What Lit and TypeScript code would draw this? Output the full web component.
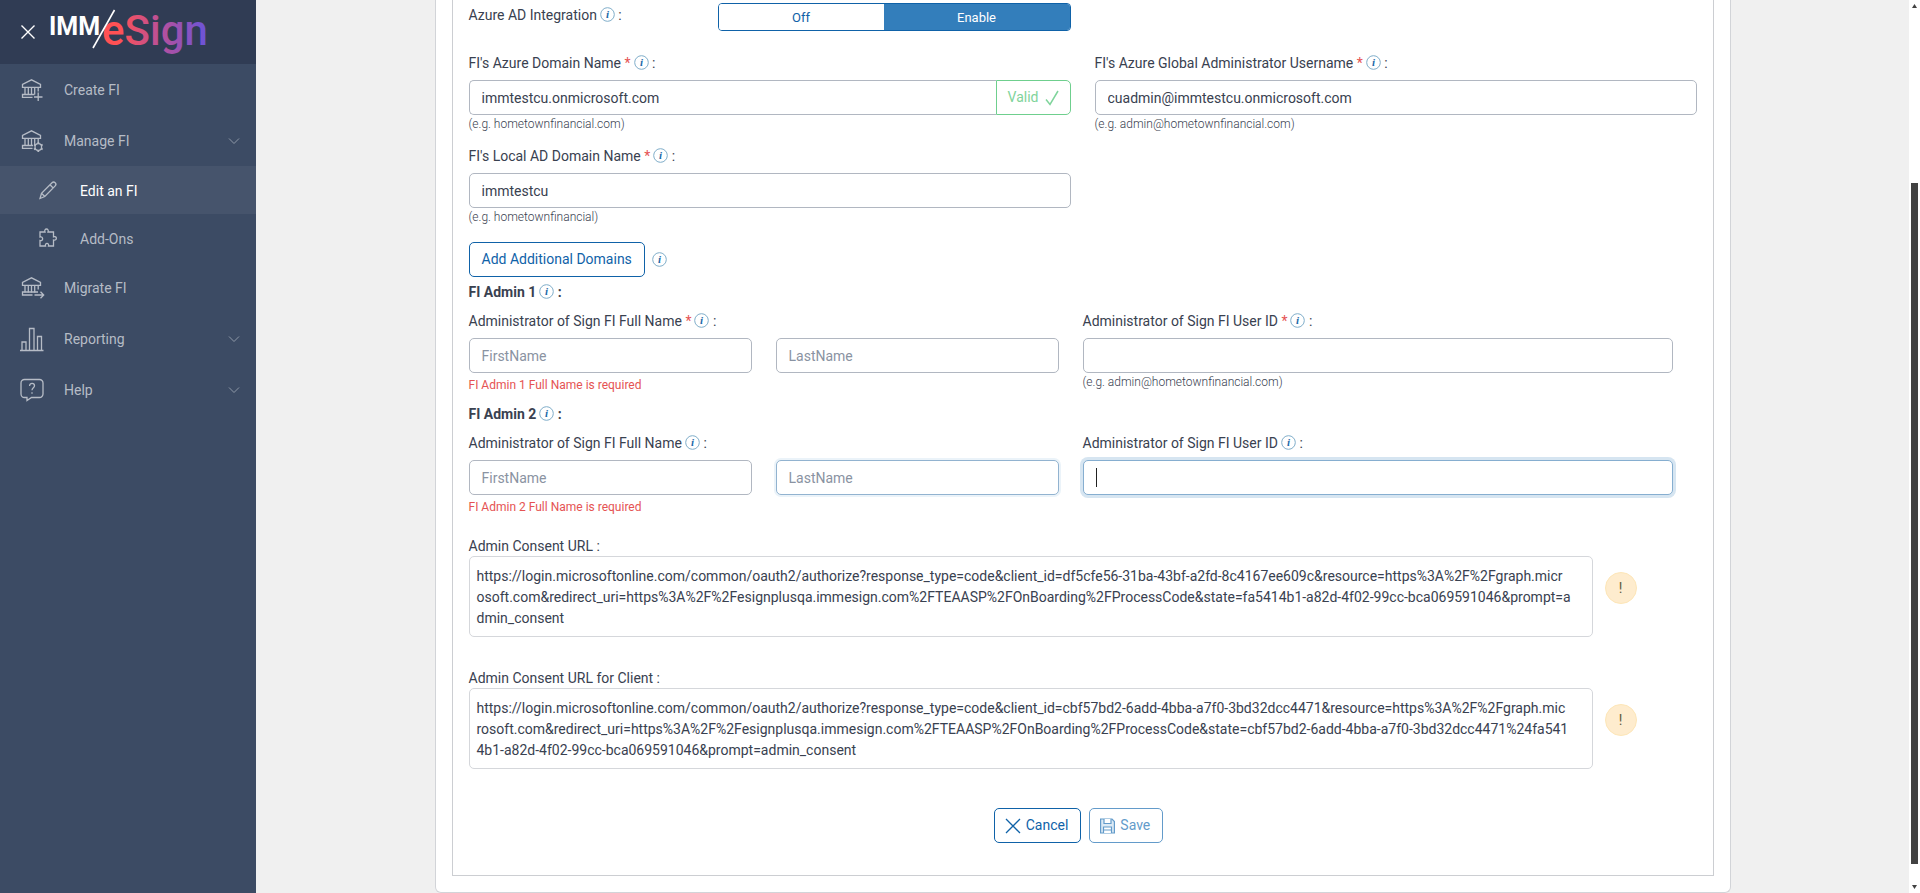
import { LitElement, html, css, svg, nothing } from "lit";
import { customElement } from "lit/decorators.js";
import { classMap } from "lit/directives/class-map.js";

const bank = svg`
  <path d="M3.500 10.300 V7.300 L12.500 2.800 L21.500 7.300 V10.300 Z" />
  <path d="M6 10.300 V17.500 M9.300 10.300 V17.500 M12.500 10.300 V17.500 M15.700 10.300 V17.500 M19.200 10.300 V14.500" />`;

const icons: Record<string, unknown> = {
  create: svg`${bank}<path d="M15.500 17.500 H3.500 V20.300 H13.500 M19.200 15.500 V24 M15 20 H23.500" />`,
  manage: svg`${bank}<path d="M14 17.500 H3.500 V20.300 H13.500" />
    <circle cx="19.300" cy="19" r="3.300" />
    <path d="M19.300 14 V15.700 M19.300 22.300 V24 M15 16.500 L16.500 17.400 M22.100 20.600 L23.600 21.500 M15 21.500 L16.500 20.600 M22.100 17.400 L23.600 16.500" stroke-width="1.800" />`,
  migrate: svg`${bank}<path d="M19 17 H3.500 V20 H13.500 M15.500 20 H24.500 M21.500 16.700 L24.700 20 L21.500 23.300" />`,
  reporting: svg`<path d="M1 24.500 H24.500 M3 24.500 V16 H7 V24.500 M10.500 24.500 V2.500 H15 V24.500 M18.500 24.500 V10.500 H22.500 V24.500" />`,
  help: svg`<path d="M5.500 2.500 H20.500 A3.500 3.500 0 0 1 24 6 V17 A3.500 3.500 0 0 1 20.500 20.500 H12.500 L8 23.500 V20.500 H5.500 A3.500 3.500 0 0 1 2 17 V6 A3.500 3.500 0 0 1 5.500 2.500 Z" />
    <path d="M10.600 9 C10.600 5.500 15.500 5.800 15.500 8.800 C15.500 10.800 13 10.800 13 13.300 M13 15.300 V16.800" />`,
  edit: svg`<path d="M5 21.500 L6.500 16.300 L17 5.800 A2.200 2.200 0 0 1 20.200 8.900 L9.800 19.500 Z M6.500 16.300 L9.800 19.500 M15 7.800 L18.200 11" />`,
  addons: svg`<path d="M5 7 H10 C8.500 3 14.500 3 13 7 H18.500 V11.800 C22.300 10.300 22.300 16.300 18.500 15 V21 H13.500 C14.500 17.500 9.500 17.500 10.500 21 H5 V15.500 C8.500 16.700 8.500 10.800 5 12 Z" />`,
};

interface NavEntry {
  id: string;
  text: string;
  sub?: boolean;
  active?: boolean;
  expandable?: boolean;
}

const entries: NavEntry[] = [
  { id: "create", text: "Create FI" },
  { id: "manage", text: "Manage FI", expandable: true },
  { id: "edit", text: "Edit an FI", sub: true, active: true },
  { id: "addons", text: "Add-Ons", sub: true },
  { id: "migrate", text: "Migrate FI" },
  { id: "reporting", text: "Reporting", expandable: true },
  { id: "help", text: "Help", expandable: true },
];

@customElement("side-nav")
class SideNav extends LitElement {
  static styles = css`
    :host {
      display: block;
      background: #3c4b64;
      font: 14px/21px Roboto, sans-serif;
    }
    .brand {
      display: flex;
      align-items: center;
      height: 64px;
      padding-left: 20px;
      background: #303c54;
    }
    .close {
      display: flex;
      padding: 0;
      border: 0;
      background: none;
    }
    .logo {
      margin-left: 14px;
    }
    .esign {
      font: 500 42px Roboto, sans-serif;
    }
    .imm {
      font: 700 25px Roboto, sans-serif;
    }
    .item {
      display: flex;
      align-items: center;
      box-sizing: border-box;
      width: 100%;
      height: 51px;
      padding: 0 16px 0 19px;
      border: 0;
      background: none;
      color: #b6bcc6;
      font: inherit;
      text-align: left;
      text-decoration: none;
    }
    .item.sub {
      height: 48px;
      padding-left: 35px;
    }
    .item.active {
      background: #46546c;
      color: #fff;
    }
    .glyph {
      flex: none;
      margin-right: 19px;
      color: #b6bcc6;
    }
    .text {
      flex: 1;
      padding-top: 2px;
    }
  `;

  private entry(e: NavEntry) {
    const classes = classMap({ item: true, sub: !!e.sub, active: !!e.active });
    const body = html`
      <svg class="glyph" width="26" height="26" viewBox="0 0 26 26" fill="none" stroke="currentColor" stroke-width="1.3" aria-hidden="true">
        ${icons[e.id]}
      </svg>
      <span class="text">${e.text}</span>
      ${e.expandable
        ? html`<svg width="12" height="8" viewBox="0 0 12 8" fill="none" stroke="#8f99a8" aria-hidden="true">
            <path d="M1 1.500 L6 6.500 L11 1.500" />
          </svg>`
        : nothing}`;
    return e.expandable
      ? html`<button type="button" class=${classes}>${body}</button>`
      : html`<a href="#${e.id}" class=${classes}>${body}</a>`;
  }

  render() {
    return html`
      <div class="brand">
        <button type="button" class="close" aria-label="Close menu">
          <svg width="16" height="16" viewBox="0 0 16 16" stroke="#fff" stroke-width="1.400">
            <path d="M1.500 1.500 L14.500 14.500 M14.500 1.500 L1.500 14.500" />
          </svg>
        </button>
        <svg class="logo" width="160" height="64" viewBox="0 0 160 64" role="img" aria-label="IMM/eSign">
          <defs>
            <linearGradient id="fade" gradientUnits="userSpaceOnUse" x1="54" y1="0" x2="156" y2="0">
              <stop offset="0.150" stop-color="#ff5154" />
              <stop offset="0.550" stop-color="#b9509a" />
              <stop offset="1" stop-color="#6b54d8" />
            </linearGradient>
          </defs>
          <text class="esign" x="52" y="45" fill="url(#fade)">eSign</text>
          <text class="imm" x="-1" y="35" fill="#fff">IMM</text>
          <path d="M43 48 L64.500 10" stroke="#fff" stroke-width="1.600" />
        </svg>
      </div>
      <nav>${entries.map((e) => this.entry(e))}</nav>
    `;
  }
}

@customElement("info-mark")
class InfoMark extends LitElement {
  static styles = css`
    :host {
      display: inline-block;
      width: 15px;
      height: 15px;
      margin-left: 3px;
      vertical-align: -2px;
    }
    .mark {
      display: block;
    }
    .letter {
      font: italic 700 11px "Liberation Serif", serif;
    }
  `;
  render() {
    return html`<svg class="mark" width="15" height="15" viewBox="0 0 15 15" role="img" aria-label="More information">
      <circle cx="7.500" cy="7.500" r="6.800" fill="#fff" stroke="#7fadc9" />
      <text class="letter" x="7.500" y="11" text-anchor="middle" fill="#1c6aa8">i</text>
    </svg>`;
  }
}

interface FieldSpec {
  id: string;
  text: string;
  required?: boolean;
}

@customElement("app-root")
class AppRoot extends LitElement {
  static styles = css`
    :host {
      display: grid;
      grid-template-columns: 256px 1fr 11px;
      height: 100vh;
      overflow: hidden;
      background: #f0f0f0;
      color: #394150;
      font: 14px/21px Roboto, sans-serif;
    }
    .main {
      display: flex;
      justify-content: center;
      align-items: flex-start;
      min-width: 0;
    }
    .card {
      box-sizing: border-box;
      width: 1296px;
      max-width: 100%;
      padding: 0 16px 16px;
      border: 1px solid #d2d4d8;
      border-top: 0;
      border-radius: 0 0 6px 6px;
      background: #fff;
    }
    .panel {
      padding: 3px 16px 32px;
      border: 1px solid #ccced2;
      border-top: 0;
    }
    .columns {
      display: grid;
      grid-template-columns: 1fr 1fr;
      column-gap: 24px;
    }
    .switch-row {
      display: flex;
      align-items: center;
      justify-content: space-between;
      margin-bottom: 22px;
    }
    .switch-name {
      padding-bottom: 4px;
    }
    .switch {
      display: flex;
      box-sizing: border-box;
      height: 28px;
      border: 1px solid #0f62a8;
      border-radius: 4px;
      overflow: hidden;
      font-size: 13px;
    }
    .choice {
      width: 165px;
      border: 0;
      background: #fff;
      color: #0f62a8;
      font: inherit;
    }
    .choice.on {
      width: 186px;
      background: #337ebb;
      color: #fff;
    }
    .label {
      display: block;
      margin-bottom: 6px;
    }
    .required {
      color: #e55353;
    }
    .input {
      box-sizing: border-box;
      width: 100%;
      height: 35px;
      padding: 0 12px;
      border: 1px solid #b1b7c1;
      border-radius: 5px;
      outline: 0;
      background: #fff;
      color: #394150;
      font: inherit;
    }
    .input::placeholder {
      color: #8a93a2;
      opacity: 1;
    }
    .input.leaving {
      border-color: #92b3d0;
      box-shadow: 0 0 0 2px #ebf3f9;
    }
    .input.focused {
      border-color: #86aed0;
      box-shadow: 0 0 0 3px #d6e5f1;
      caret-color: transparent;
      background: linear-gradient(#222, #222) 12px 50% / 1px 19px no-repeat #fff;
    }
    .group {
      display: flex;
    }
    .group .input {
      flex: 1;
      border-right: 0;
      border-radius: 5px 0 0 5px;
    }
    .valid {
      display: flex;
      align-items: center;
      gap: 6px;
      box-sizing: border-box;
      height: 35px;
      padding: 0 11px;
      border: 1px solid #6fcf8e;
      border-radius: 0 5px 5px 0;
      color: #7fd49b;
    }
    .hint {
      font-size: 12px;
      font-weight: 300;
      line-height: 18px;
    }
    .error {
      margin-top: 3px;
      color: #e55353;
      font-size: 12px;
      line-height: 18px;
    }
    .next {
      margin-top: 13px;
    }
    .add {
      display: flex;
      align-items: center;
      gap: 4px;
      margin-top: 16px;
    }
    .button {
      display: flex;
      align-items: center;
      gap: 5px;
      box-sizing: border-box;
      height: 35px;
      padding: 0 12px;
      border: 1px solid #0f62a8;
      border-radius: 5px;
      background: #fff;
      color: #0f62a8;
      font: inherit;
    }
    .button.iconed {
      padding-left: 10px;
    }
    .button:disabled {
      border-color: #639bca;
      color: #639bca;
    }
    .title {
      margin: 5px 0 8px;
      font-size: 14px;
      font-weight: 700;
      line-height: 21px;
    }
    .title.second {
      margin-top: 10px;
    }
    .admin {
      padding-right: 24px;
    }
    .consent {
      margin-top: 21px;
    }
    .consent.client {
      margin-top: 32px;
    }
    .consent .label {
      margin-bottom: 0;
      line-height: 19px;
    }
    .url-row {
      display: flex;
      gap: 12px;
      padding-right: 60px;
    }
    .url {
      display: block;
      flex: 1;
      box-sizing: border-box;
      height: 81px;
      padding: 9px 7px 7px;
      border: 1px solid #d5d7db;
      border-radius: 5px;
      outline: 0;
      resize: none;
      overflow: hidden;
      background: #fff;
      color: #394150;
      font: inherit;
      word-break: break-all;
    }
    .warn {
      box-sizing: border-box;
      width: 32px;
      height: 32px;
      margin-top: 16px;
      padding: 0;
      border: 1px solid #fde6b8;
      border-radius: 50%;
      background: #feecce;
      color: #5d5a3c;
      font: 14px/30px Roboto, sans-serif;
    }
    .actions {
      display: flex;
      justify-content: center;
      gap: 8px;
      margin-top: 39px;
      padding-right: 8px;
    }
    .scroll {
      display: flex;
      flex-direction: column;
      align-items: center;
      justify-content: space-between;
      padding: 4px 0;
      background: #fff;
    }
    .thumb {
      width: 7px;
      height: 77%;
      margin-top: 154px;
      background: #424242;
    }
  `;

  private label(f: FieldSpec, info = true) {
    return html`<label class="label" for=${f.id}
      >${f.text}${f.required ? html` <span class="required">*</span>` : nothing}${info
        ? html`<info-mark></info-mark>`
        : nothing}
      :</label
    >`;
  }

  private admin(n: number, required: boolean) {
    const second = n === 2;
    return html`
      <h2 class=${classMap({ title: true, second })}>FI Admin ${n}<info-mark></info-mark> :</h2>
      <div class="columns admin">
        <div>
          ${this.label({ id: `first-${n}`, text: "Administrator of Sign FI Full Name", required })}
          <div class="columns">
            <input class="input" id="first-${n}" type="text" placeholder="FirstName" />
            <input
              class=${classMap({ input: true, leaving: second })}
              type="text"
              placeholder="LastName"
              aria-label="Administrator ${n} last name"
            />
          </div>
          <div class="error">FI Admin ${n} Full Name is required</div>
        </div>
        <div>
          ${this.label({ id: `user-${n}`, text: "Administrator of Sign FI User ID", required })}
          <input class=${classMap({ input: true, focused: second })} id="user-${n}" type="text" />
          ${second ? nothing : html`<div class="hint">(e.g. admin@hometownfinancial.com)</div>`}
        </div>
      </div>
    `;
  }

  private consent(id: string, text: string, lines: string[], client: boolean) {
    return html`
      <div class=${classMap({ consent: true, client })}>
        ${this.label({ id, text }, false)}
        <div class="url-row">
          <textarea class="url" id=${id} readonly .value=${lines.join("\n")}></textarea>
          <button type="button" class="warn" aria-label="Consent notice">!</button>
        </div>
      </div>
    `;
  }

  render() {
    return html`
      <side-nav></side-nav>
      <main class="main">
        <form class="card">
          <div class="panel">
            <div class="columns">
              <div class="switch-row">
                <span class="switch-name">Azure AD Integration<info-mark></info-mark> :</span>
                <div class="switch" role="group" aria-label="Azure AD Integration">
                  <button type="button" class="choice" aria-pressed="false">Off</button>
                  <button type="button" class="choice on" aria-pressed="true">Enable</button>
                </div>
              </div>
            </div>

            <div class="columns">
              <div>
                ${this.label({ id: "domain", text: "FI's Azure Domain Name", required: true })}
                <div class="group">
                  <input class="input" id="domain" type="text" value="immtestcu.onmicrosoft.com" />
                  <span class="valid">
                    Valid
                    <svg width="14" height="16" viewBox="0 0 14 16" fill="none" stroke="currentColor" stroke-width="1.500" aria-hidden="true">
                      <path d="M1 9.500 L5 14.500 L13 1" />
                    </svg>
                  </span>
                </div>
                <div class="hint">(e.g. hometownfinancial.com)</div>
              </div>
              <div>
                ${this.label({ id: "global", text: "FI's Azure Global Administrator Username", required: true })}
                <input class="input" id="global" type="text" value="cuadmin@immtestcu.onmicrosoft.com" />
                <div class="hint">(e.g. admin@hometownfinancial.com)</div>
              </div>
            </div>

            <div class="columns next">
              <div>
                ${this.label({ id: "local", text: "FI's Local AD Domain Name", required: true })}
                <input class="input" id="local" type="text" value="immtestcu" />
                <div class="hint">(e.g. hometownfinancial)</div>
              </div>
            </div>

            <div class="add">
              <button type="button" class="button">Add Additional Domains</button>
              <info-mark></info-mark>
            </div>

            ${this.admin(1, true)} ${this.admin(2, false)}
            ${this.consent(
              "consent",
              "Admin Consent URL",
              [
                "https://login.microsoftonline.com/common/oauth2/authorize?response_type=code&client_id=df5cfe56-31ba-43bf-a2fd-8c4167ee609c&resource=https%3A%2F%2Fgraph.micr",
                "osoft.com&redirect_uri=https%3A%2F%2Fesignplusqa.immesign.com%2FTEAASP%2FOnBoarding%2FProcessCode&state=fa5414b1-a82d-4f02-99cc-bca069591046&prompt=a",
                "dmin_consent",
              ],
              false
            )}
            ${this.consent(
              "consent-client",
              "Admin Consent URL for Client",
              [
                "https://login.microsoftonline.com/common/oauth2/authorize?response_type=code&client_id=cbf57bd2-6add-4bba-a7f0-3bd32dcc4471&resource=https%3A%2F%2Fgraph.mic",
                "rosoft.com&redirect_uri=https%3A%2F%2Fesignplusqa.immesign.com%2FTEAASP%2FOnBoarding%2FProcessCode&state=cbf57bd2-6add-4bba-a7f0-3bd32dcc4471%24fa541",
                "4b1-a82d-4f02-99cc-bca069591046&prompt=admin_consent",
              ],
              true
            )}

            <div class="actions">
              <button type="button" class="button iconed">
                <svg width="16" height="16" viewBox="0 0 16 16" fill="none" stroke="currentColor" stroke-width="1.300" aria-hidden="true">
                  <path d="M1 1 L15 15 M15 1 L1 15" />
                </svg>
                Cancel
              </button>
              <button type="submit" class="button iconed" disabled>
                <svg width="15" height="16" viewBox="0 0 15 16" fill="none" stroke="currentColor" stroke-width="1.200" aria-hidden="true">
                  <path d="M0.600 1 H12 L14.400 3.500 V15 H0.600 Z" fill="#dceaf5" />
                  <path d="M4 1 V5.500 H11 V1 M3.500 15 V9 H11.500 V15 M3.500 12 H11.500" fill="#fff" />
                </svg>
                Save
              </button>
            </div>
          </div>
        </form>
      </main>
      <div class="scroll" aria-hidden="true">
        <svg width="5" height="4" viewBox="0 0 5 4"><path d="M0 4 L2.500 0 L5 4 Z" fill="#424242" /></svg>
        <div class="thumb"></div>
        <svg width="5" height="4" viewBox="0 0 5 4"><path d="M0 0 L2.500 4 L5 0 Z" fill="#424242" /></svg>
      </div>
    `;
  }
}
